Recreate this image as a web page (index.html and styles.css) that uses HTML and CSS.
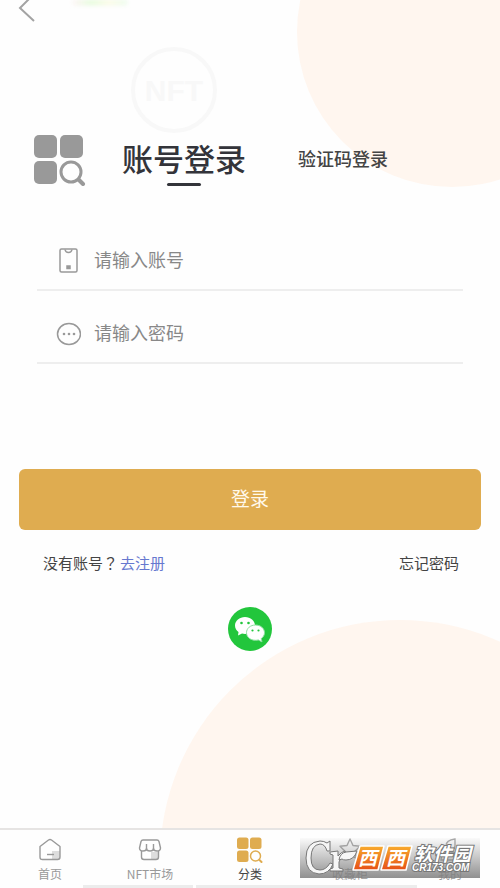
FILE: index.html
```html
<!DOCTYPE html>
<html lang="zh-CN">
<head>
<meta charset="utf-8">
<meta name="viewport" content="width=device-width, initial-scale=1">
<title>账号登录</title>
<link rel="stylesheet" href="styles.css">
</head>
<body>
<svg class="symbols" aria-hidden="true">
  <symbol id="grid-search" viewBox="0 0 52 52">
    <rect x="0" y="1" width="23" height="23" rx="5" fill="currentColor"/>
    <rect x="26" y="1" width="23" height="23" rx="5" fill="currentColor"/>
    <rect x="0" y="27" width="23" height="23" rx="5" fill="currentColor"/>
    <circle cx="37" cy="38" r="10" fill="none" stroke="currentColor" stroke-width="3"/>
    <path d="M45 46l4 4" stroke="currentColor" stroke-width="4" stroke-linecap="round"/>
  </symbol>
</svg>
<div class="page">
  <main class="content">
    <div class="blob blob-top"></div>
    <div class="blob blob-bottom"></div>
    <header class="topbar">
      <button class="back" type="button" aria-label="返回">
        <svg width="18" height="30" viewBox="0 0 18 30" fill="none" stroke="#a3a3a3" stroke-width="2"><path d="M16 1L2 15l14 13"/></svg>
      </button>
      <span class="glow" aria-hidden="true"></span>
    </header>
    <svg class="brand" viewBox="0 0 88 88">
      <circle cx="44" cy="44" r="41" fill="none" stroke="#f8f8f8" stroke-width="4"/>
      <text class="brand-text" x="44" y="55" text-anchor="middle">NFT</text>
    </svg>
    <div class="tabs">
      <svg class="tabs-icon"><use href="#grid-search"/></svg>
      <button class="tab tab-active" type="button">账号登录</button>
      <button class="tab" type="button">验证码登录</button>
    </div>
    <form class="form">
      <div class="field">
        <label for="account" aria-label="账号">
          <svg class="field-icon" viewBox="0 0 26 26" fill="none" stroke="#999" stroke-width="1.5"><rect x="5" y="1" width="17" height="23" rx="1.5"/><path d="M10 1.5q.5 3 3.500 3t3.500-3"/><rect x="12" y="18" width="3" height="2.500" fill="#999"/></svg>
        </label>
        <input id="account" type="text" placeholder="请输入账号">
      </div>
      <div class="field">
        <label for="password" aria-label="密码">
          <svg class="field-icon" viewBox="0 0 26 26"><ellipse cx="14" cy="13" rx="11.500" ry="10.500" fill="none" stroke="#999" stroke-width="1.500"/><g fill="#999"><circle cx="9" cy="13" r="1.300"/><circle cx="14" cy="13" r="1.300"/><circle cx="19" cy="13" r="1.300"/></g></svg>
        </label>
        <input id="password" type="password" placeholder="请输入密码">
      </div>
      <button class="submit" type="submit">登录</button>
    </form>
    <div class="links">
      <p>没有账号<span lang="zh-TW" class="mark">？</span><a class="register" href="#register">去注册</a></p>
      <a href="#forgot">忘记密码</a>
    </div>
    <button class="wechat" type="button" aria-label="微信登录">
      <svg viewBox="0 0 44 44">
        <circle cx="22" cy="22" r="22" fill="#22c63c"/>
        <path fill="#fff" d="M17 10c-5.500 0-10 3.700-10 8.500 0 2.700 1.400 5 3.500 6.500L10 28.500l4-2c1 .3 2 .4 3 .4 5.500 0 10-3.700 10-8.400S22.500 10 17 10z"/>
        <path fill="#fff" stroke="#8ddfa0" stroke-width="1" d="M27.500 18c-5 0-9 3.300-9 7.700s4 7.600 9 7.600c1 0 1.900-.1 2.800-.4l3.700 2-.8-3.300c2-1.400 3.300-3.500 3.300-5.900 0-4.400-4-7.700-9-7.700z"/>
        <g fill="#22c63c"><circle cx="13.500" cy="16" r="1.300"/><circle cx="20.500" cy="16" r="1.300"/><circle cx="24.500" cy="23.500" r="1.100"/><circle cx="30.500" cy="23.500" r="1.100"/></g>
      </svg>
    </button>
  </main>
  <nav class="nav">
    <a class="nav-item" href="#home">
      <svg class="nav-icon" viewBox="0 0 26 26" fill="none" stroke="#999" stroke-width="1.400" stroke-linejoin="round"><path d="M15 14h8v8h-8z" fill="#ddd" stroke="none"/><path d="M3 9.500L11.500 3q1.500-1 3 0L23 9.500V20q0 2.500-2.500 2.500h-15Q3 22.500 3 20z"/><path d="M10 17.500h7"/></svg>
      <span>首页</span>
    </a>
    <a class="nav-item" href="#market">
      <svg class="nav-icon" viewBox="0 0 26 26" fill="none" stroke="#999" stroke-width="1.400" stroke-linejoin="round"><path d="M14 15h7v7h-7z" fill="#ddd" stroke="none"/><path d="M6 3h14q1.500 0 2 1.500l1.500 6.500q0 3-3.500 3t-3.500-2.500Q16.500 14 13 14t-3.500-2.500Q9.500 14 6 14t-3.500-3L4 4.500Q4.500 3 6 3z"/><path d="M9.500 7v5M16.500 7v5M4.500 14v6q0 2.500 2.500 2.500h12q2.500 0 2.500-2.500v-6"/></svg>
      <span>NFT市场</span>
    </a>
    <a class="nav-item nav-active" href="#category">
      <svg class="nav-icon"><use href="#grid-search"/></svg>
      <span>分类</span>
    </a>
    <a class="nav-item" href="#collection">
      <svg class="nav-icon" viewBox="0 0 26 26" fill="none" stroke="#999" stroke-width="1.400" stroke-linejoin="round"><path d="M13 2l3 6.500 7 .8-5 5 1.300 7L13 18l-6.300 3.300 1.300-7-5-5 7-.8z"/></svg>
      <span>收藏柜</span>
    </a>
    <a class="nav-item" href="#mine">
      <svg class="nav-icon" viewBox="0 0 26 26" fill="none" stroke="#999" stroke-width="1.400"><path d="M9 9q0-6 9-7v7q-1 4-5 4t-4-4zM4 23q0-8 9-8t9 8z"/></svg>
      <span>我的</span>
    </a>
    <div class="watermark">
      <svg viewBox="0 0 180 40">
        <defs>
          <linearGradient id="orange" x1="0" y1="0" x2="0" y2="1"><stop offset="0" stop-color="#f8ac2d"/><stop offset="1" stop-color="#e64f16"/></linearGradient>
        </defs>
        <g fill="#f6f6f6" stroke="#777" stroke-width="1" stroke-linejoin="round">
          <path d="M30 3v10h-3Q25 6 20 6q-9 1-9 14 0 12 9 12 6 0 10-7l3 1q-4 10-14 10Q6 35 6 20 6 4 20 3q4 0 7 2z"/>
          <path d="M30 14l8-1v5q3-4 7-5l2 4q-6 1-8 7v6l4 1v2H30v-2l3-1V17l-3-1z"/>
          <path d="M39 22q1-7 7-8l11-1q-3 9-11 9-3 0-4-1z"/>
        </g>
        <path d="M60 8h24l-6 24H53zM88 8h24l-6 24H81z" fill="url(#orange)" stroke="#fff" stroke-width="1.500" stroke-linejoin="round"/>
        <text class="mark-main" x="58" y="27">西</text>
        <text class="mark-main" x="86" y="27">西</text>
        <text class="mark-name" x="114" y="23">软件园</text>
        <text class="mark-site" x="112" y="33">CR173.COM</text>
      </svg>
    </div>
    <div class="strip" aria-hidden="true"><i></i><i></i></div>
  </nav>
</div>
</body>
</html>
```
FILE: styles.css
```css
* { box-sizing: border-box; }
body {
  margin: 0;
  background: #fefefe;
  color: #444;
  font-family: "Noto Sans CJK SC", sans-serif;
  font-size: 15px;
}
button, input {
  border: 0;
  padding: 0;
  background: none;
  color: inherit;
  font: inherit;
}
button { cursor: pointer; }
a { color: inherit; text-decoration: none; }
p { margin: 0; }
svg { display: block; }
.symbols { position: absolute; width: 0; height: 0; }

.page {
  display: flex;
  flex-direction: column;
  min-height: 100vh;
}
.content {
  position: relative;
  flex: 1;
  display: flex;
  flex-direction: column;
  overflow: hidden;
  isolation: isolate;
}
.blob {
  position: absolute;
  z-index: -1;
  border-radius: 50%;
  background: #fff6ef;
}
.blob-top { top: -123px; right: -107px; width: 310px; height: 310px; }
.blob-bottom { top: 620px; right: -140px; width: 480px; height: 480px; }

.topbar {
  display: flex;
  gap: 37px;
  height: 46px;
  padding-left: 18px;
}
.back { align-self: flex-start; margin-top: -7px; }
.glow {
  width: 54px;
  height: 5px;
  background: linear-gradient(90deg, #fdf3f3, #e3fbd9, #fafbe4, #eafbea);
  filter: blur(2px);
}
.brand { width: 88px; height: 88px; margin-left: 130px; }
.brand-text { font: bold 30px "Liberation Sans", sans-serif; fill: #f8f8f8; }

.tabs {
  display: flex;
  align-items: flex-start;
  padding-left: 34px;
}
.tabs-icon { width: 52px; height: 52px; margin-right: 36px; color: #999; }
.tab {
  height: 52px;
  margin-right: 52px;
  padding-bottom: 4px;
  line-height: 48px;
  font-size: 18px;
  font-weight: 500;
}
.tab-active {
  position: relative;
  font-size: 31px;
  color: #33343a;
}
.tab-active::after {
  content: "";
  position: absolute;
  left: 50%;
  bottom: 0;
  width: 34px;
  height: 3px;
  margin-left: -17px;
  border-radius: 2px;
  background: #33343a;
}

.form { display: flex; flex-direction: column; padding: 32px 19px 0; }
.field {
  display: flex;
  align-items: center;
  gap: 13px;
  height: 73px;
  margin: 0 18px;
  padding: 14px 0 0 18px;
  border-bottom: 2px solid #eee;
}
.field-icon { width: 26px; height: 26px; }
.field input {
  flex: 1;
  min-width: 0;
  height: 40px;
  padding-bottom: 4px;
  font-size: 18px;
  outline: 0;
}
.field input::placeholder { color: #888; opacity: 1; }
.submit {
  height: 61px;
  margin-top: 105px;
  padding-bottom: 4px;
  border-radius: 6px;
  background: #dfac50;
  color: #fff9ec;
  font-size: 19px;
}
.links {
  display: flex;
  justify-content: space-between;
  padding: 21px 41px 0 43px;
  line-height: 24px;
}
.mark { margin-right: 2px; font-family: "Noto Sans CJK TC", sans-serif; }
.register { color: #6678cf; }
.wechat { align-self: center; width: 44px; height: 44px; margin-top: 32px; }

.nav {
  position: relative;
  display: grid;
  grid-template-columns: repeat(5, 1fr);
  height: 60px;
  border-top: 2px solid #e6e4e3;
  background: #fefefe;
}
.nav-item {
  display: flex;
  flex-direction: column;
  align-items: center;
  padding-top: 7px;
  color: #999;
  font-size: 12px;
  line-height: 22px;
}
.nav-icon { width: 26px; height: 26px; }
.nav-active { color: #444; }
.nav-active .nav-icon { color: #dfac50; }
.watermark {
  position: absolute;
  right: 20px;
  bottom: 10px;
  width: 180px;
  height: 40px;
  background: linear-gradient(rgba(235, 235, 235, 0.2), rgba(125, 125, 125, 0.85));
}
.mark-main { font-size: 19px; font-style: italic; font-weight: 700; fill: #fff; }
.mark-name {
  font-size: 19px;
  font-style: italic;
  font-weight: 700;
  fill: #fff;
  stroke: #777;
  stroke-width: 2px;
  paint-order: stroke;
}
.mark-site {
  font: italic bold 10px "Liberation Sans", sans-serif;
  fill: #fff;
  stroke: #777;
  stroke-width: 2px;
  paint-order: stroke;
}
.strip {
  position: absolute;
  bottom: 0;
  left: 83px;
  right: 83px;
  display: grid;
  grid-template-columns: 1fr 2fr;
  gap: 3px;
}
.strip i { height: 3px; background: #ececec; }
```
